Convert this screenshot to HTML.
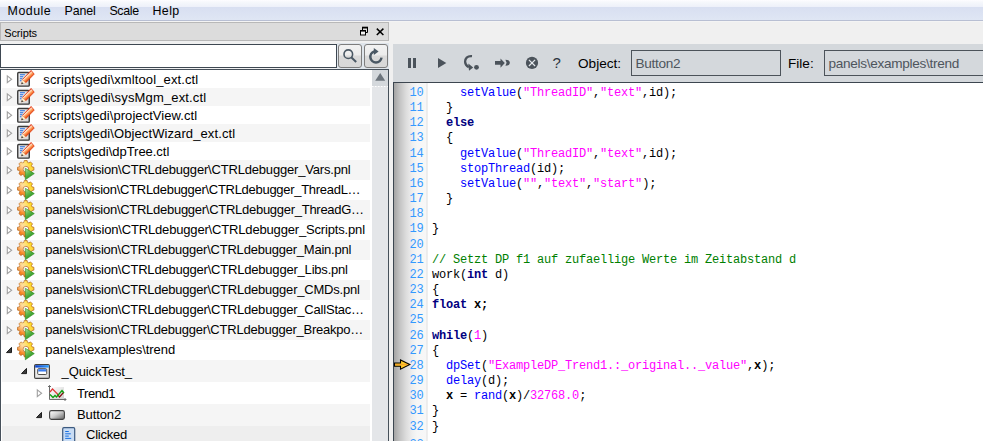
<!DOCTYPE html>
<html><head><meta charset="utf-8">
<style>
*{margin:0;padding:0;box-sizing:border-box}
html,body{width:983px;height:441px;overflow:hidden;background:#f0f0f0;font-family:"Liberation Sans",sans-serif;position:relative}
.a{position:absolute}
#menubar{left:0;top:0;width:983px;height:22px;background:linear-gradient(#fdfdff 0px,#f6f8fc 2px,#eef1fa 6.5px,#d8dff1 7px,#dfe6f4 20px,#b8bfd3 20px,#b8bfd3 21px,#f6f6f6 21px,#f2f2f2 22px)}
.mi{position:absolute;top:4px;font-size:12.4px;color:#000;white-space:pre}
#title{left:0;top:22px;width:389px;height:19px;background:#dcdcdc;border:1px solid #b8b8b8}
#title span{position:absolute;left:3.2px;top:3.6px;font-size:11px;color:#000;letter-spacing:-0.12px}
#search{left:0;top:44px;width:337px;height:24px;background:#fff;border:1px solid #3e4852}
.btn{top:44px;width:24px;height:24px;border:1px solid #7d7d7d;border-radius:3px;background:linear-gradient(#f2f2f2 0,#ececec 10px,#dadada 11px,#d8d8d8 100%)}
#tree{left:0;top:69px;width:389px;height:372px;border:1px solid #46505a;border-bottom:none;background:#fff;overflow:hidden}
.row{position:absolute;left:1px;width:369px;}
.row.g{background:#f5f5f5}
.t{position:absolute;font-size:13px;color:#000;white-space:pre}
#sb{left:372px;top:70px;width:16px;height:371px;background:#e4e6e9}
#sbup{left:372px;top:70px;width:16px;height:16px;background:#d4d8dc}
#toolbar{left:393px;top:44px;width:590px;height:38px;background:#d4d8dc}
#editor{left:393px;top:82px;width:590px;height:359px;background:#fff;border-top:1px solid #3c4650;border-left:1px solid #3c4650}
#gutter{left:394px;top:83px;width:34px;height:358px;background:linear-gradient(90deg,#a4a4a4 0px,#c4c4c4 6px,#dcdcdc 12px,#eeeeee 18px,#f6f6f6 23px,#f7f7f7 32px,#ebebeb 32px,#efefef 34px)}
.ln{position:absolute;left:394px;width:29.5px;text-align:right;font:12px "Liberation Mono",monospace;letter-spacing:-0.2px;color:#3399ff;white-space:pre;line-height:15px}
.cl{position:absolute;left:432px;font:12px "Liberation Mono",monospace;letter-spacing:-0.2px;color:#000;white-space:pre;line-height:15px}
.f{color:#0000ff}.s{color:#ff00ff}.k{color:#000080;font-weight:bold}.c{color:#008000}.b{font-weight:bold}
.lbl{position:absolute;font-size:13.6px;color:#000;top:56px;letter-spacing:0px}
.fld{position:absolute;top:50px;height:26px;border:1px solid #4c535a;background:#d4d8dc;font-size:13.6px;color:#4e555d;padding:4.5px 0 0 3.5px;letter-spacing:-0.3px;white-space:pre}
</style></head><body>
<div id="menubar" class="a">
  <span class="mi" style="left:7.6px;letter-spacing:0.5px">Module</span>
  <span class="mi" style="left:64.6px;letter-spacing:-0.12px">Panel</span>
  <span class="mi" style="left:109.4px;letter-spacing:-0.3px">Scale</span>
  <span class="mi" style="left:152.4px;letter-spacing:0.45px">Help</span>
</div>
<div id="title" class="a"><span>Scripts</span></div>
<div class="a" style="left:337px;top:43px;width:52px;height:26px;background:#dfe5eb"></div>
<div id="search" class="a"></div>
<div class="a btn" style="left:338px"></div>
<div class="a btn" style="left:364px"></div>
<div id="tree" class="a"></div>
<div class="row" style="top:70px;height:18px;left:2px;width:368px;"></div>
<div class="row g" style="top:88px;height:18px;left:2px;width:368px;"></div>
<div class="row" style="top:106px;height:18px;left:2px;width:368px;"></div>
<div class="row g" style="top:124px;height:18px;left:2px;width:368px;"></div>
<div class="row" style="top:142px;height:18px;left:2px;width:368px;"></div>
<div class="row g" style="top:160px;height:20px;left:2px;width:368px;"></div>
<div class="row" style="top:180px;height:20px;left:2px;width:368px;"></div>
<div class="row g" style="top:200px;height:20px;left:2px;width:368px;"></div>
<div class="row" style="top:220px;height:20px;left:2px;width:368px;"></div>
<div class="row g" style="top:240px;height:20px;left:2px;width:368px;"></div>
<div class="row" style="top:260px;height:20px;left:2px;width:368px;"></div>
<div class="row g" style="top:280px;height:20px;left:2px;width:368px;"></div>
<div class="row" style="top:300px;height:20px;left:2px;width:368px;"></div>
<div class="row g" style="top:320px;height:20px;left:2px;width:368px;"></div>
<div class="row" style="top:340px;height:20px;left:2px;width:368px;"></div>
<div class="row g" style="top:360px;height:22px;left:2px;width:368px;"></div>
<div class="row" style="top:382px;height:22px;left:2px;width:368px;"></div>
<div class="row g" style="top:404px;height:22px;left:2px;width:368px;"></div>
<div class="row" style="top:426px;height:18px;left:2px;width:368px;background:#eeeeee;"></div>
<svg class="a" style="left:5px;top:74px" width="9" height="10"><path d="M2.3 1.9 L6.6 5.3 L2.3 8.6 Z" fill="#fff" stroke="#a0a0a0" stroke-width="1.1"/></svg>
<svg class="a" style="left:17px;top:70px;overflow:visible" width="18" height="18" viewBox="0 0 18 18">
<defs><linearGradient id="pg" gradientUnits="userSpaceOnUse" x1="9.7" y1="4.9" x2="12.9" y2="8.4"><stop offset="0" stop-color="#e84020"/><stop offset="0.22" stop-color="#ffe6d0"/><stop offset="0.5" stop-color="#ffa868"/><stop offset="0.8" stop-color="#f47030"/><stop offset="1" stop-color="#e05010"/></linearGradient>
<linearGradient id="dg" x1="0" y1="0" x2="1" y2="1"><stop offset="0" stop-color="#f6f6f6"/><stop offset="1" stop-color="#d4d4d4"/></linearGradient></defs>
<rect x="0.75" y="2.55" width="11.5" height="13.6" rx="0.9" fill="url(#dg)" stroke="#3a3a3a" stroke-width="1.4"/>
<path d="M2.9 4.8h5M2.9 6.8h3.4M2.9 8.8h2.6M2.9 10.8h1.6" stroke="#1f6ae0" stroke-width="1.1"/>
<path d="M14.1 0.4 L17.2 4.1 L8.6 12.9 L5.4 9.6 Z" fill="url(#pg)" stroke="#e23a12" stroke-width="0.8"/>
<path d="M5.4 9.6 L8.6 12.9 L4.2 14.2 Z" fill="#fff4cc" stroke="#f0b090" stroke-width="0.4"/>
<path d="M4.1 14.3 L4.9 11.9 L6.5 13.4 Z" fill="#303030"/>
</svg>
<div class="t" style="left:43.3px;top:72px;letter-spacing:0.118px">scripts\gedi\xmltool_ext.ctl</div>
<svg class="a" style="left:5px;top:92px" width="9" height="10"><path d="M2.3 1.9 L6.6 5.3 L2.3 8.6 Z" fill="#fff" stroke="#a0a0a0" stroke-width="1.1"/></svg>
<svg class="a" style="left:17px;top:88px;overflow:visible" width="18" height="18" viewBox="0 0 18 18">
<defs><linearGradient id="pg" gradientUnits="userSpaceOnUse" x1="9.7" y1="4.9" x2="12.9" y2="8.4"><stop offset="0" stop-color="#e84020"/><stop offset="0.22" stop-color="#ffe6d0"/><stop offset="0.5" stop-color="#ffa868"/><stop offset="0.8" stop-color="#f47030"/><stop offset="1" stop-color="#e05010"/></linearGradient>
<linearGradient id="dg" x1="0" y1="0" x2="1" y2="1"><stop offset="0" stop-color="#f6f6f6"/><stop offset="1" stop-color="#d4d4d4"/></linearGradient></defs>
<rect x="0.75" y="2.55" width="11.5" height="13.6" rx="0.9" fill="url(#dg)" stroke="#3a3a3a" stroke-width="1.4"/>
<path d="M2.9 4.8h5M2.9 6.8h3.4M2.9 8.8h2.6M2.9 10.8h1.6" stroke="#1f6ae0" stroke-width="1.1"/>
<path d="M14.1 0.4 L17.2 4.1 L8.6 12.9 L5.4 9.6 Z" fill="url(#pg)" stroke="#e23a12" stroke-width="0.8"/>
<path d="M5.4 9.6 L8.6 12.9 L4.2 14.2 Z" fill="#fff4cc" stroke="#f0b090" stroke-width="0.4"/>
<path d="M4.1 14.3 L4.9 11.9 L6.5 13.4 Z" fill="#303030"/>
</svg>
<div class="t" style="left:43.3px;top:90px;letter-spacing:0.149px">scripts\gedi\sysMgm_ext.ctl</div>
<svg class="a" style="left:5px;top:110px" width="9" height="10"><path d="M2.3 1.9 L6.6 5.3 L2.3 8.6 Z" fill="#fff" stroke="#a0a0a0" stroke-width="1.1"/></svg>
<svg class="a" style="left:17px;top:106px;overflow:visible" width="18" height="18" viewBox="0 0 18 18">
<defs><linearGradient id="pg" gradientUnits="userSpaceOnUse" x1="9.7" y1="4.9" x2="12.9" y2="8.4"><stop offset="0" stop-color="#e84020"/><stop offset="0.22" stop-color="#ffe6d0"/><stop offset="0.5" stop-color="#ffa868"/><stop offset="0.8" stop-color="#f47030"/><stop offset="1" stop-color="#e05010"/></linearGradient>
<linearGradient id="dg" x1="0" y1="0" x2="1" y2="1"><stop offset="0" stop-color="#f6f6f6"/><stop offset="1" stop-color="#d4d4d4"/></linearGradient></defs>
<rect x="0.75" y="2.55" width="11.5" height="13.6" rx="0.9" fill="url(#dg)" stroke="#3a3a3a" stroke-width="1.4"/>
<path d="M2.9 4.8h5M2.9 6.8h3.4M2.9 8.8h2.6M2.9 10.8h1.6" stroke="#1f6ae0" stroke-width="1.1"/>
<path d="M14.1 0.4 L17.2 4.1 L8.6 12.9 L5.4 9.6 Z" fill="url(#pg)" stroke="#e23a12" stroke-width="0.8"/>
<path d="M5.4 9.6 L8.6 12.9 L4.2 14.2 Z" fill="#fff4cc" stroke="#f0b090" stroke-width="0.4"/>
<path d="M4.1 14.3 L4.9 11.9 L6.5 13.4 Z" fill="#303030"/>
</svg>
<div class="t" style="left:43.3px;top:108px;letter-spacing:0.059px">scripts\gedi\projectView.ctl</div>
<svg class="a" style="left:5px;top:128px" width="9" height="10"><path d="M2.3 1.9 L6.6 5.3 L2.3 8.6 Z" fill="#fff" stroke="#a0a0a0" stroke-width="1.1"/></svg>
<svg class="a" style="left:17px;top:124px;overflow:visible" width="18" height="18" viewBox="0 0 18 18">
<defs><linearGradient id="pg" gradientUnits="userSpaceOnUse" x1="9.7" y1="4.9" x2="12.9" y2="8.4"><stop offset="0" stop-color="#e84020"/><stop offset="0.22" stop-color="#ffe6d0"/><stop offset="0.5" stop-color="#ffa868"/><stop offset="0.8" stop-color="#f47030"/><stop offset="1" stop-color="#e05010"/></linearGradient>
<linearGradient id="dg" x1="0" y1="0" x2="1" y2="1"><stop offset="0" stop-color="#f6f6f6"/><stop offset="1" stop-color="#d4d4d4"/></linearGradient></defs>
<rect x="0.75" y="2.55" width="11.5" height="13.6" rx="0.9" fill="url(#dg)" stroke="#3a3a3a" stroke-width="1.4"/>
<path d="M2.9 4.8h5M2.9 6.8h3.4M2.9 8.8h2.6M2.9 10.8h1.6" stroke="#1f6ae0" stroke-width="1.1"/>
<path d="M14.1 0.4 L17.2 4.1 L8.6 12.9 L5.4 9.6 Z" fill="url(#pg)" stroke="#e23a12" stroke-width="0.8"/>
<path d="M5.4 9.6 L8.6 12.9 L4.2 14.2 Z" fill="#fff4cc" stroke="#f0b090" stroke-width="0.4"/>
<path d="M4.1 14.3 L4.9 11.9 L6.5 13.4 Z" fill="#303030"/>
</svg>
<div class="t" style="left:43.3px;top:126px;letter-spacing:0.101px">scripts\gedi\ObjectWizard_ext.ctl</div>
<svg class="a" style="left:5px;top:146px" width="9" height="10"><path d="M2.3 1.9 L6.6 5.3 L2.3 8.6 Z" fill="#fff" stroke="#a0a0a0" stroke-width="1.1"/></svg>
<svg class="a" style="left:17px;top:142px;overflow:visible" width="18" height="18" viewBox="0 0 18 18">
<defs><linearGradient id="pg" gradientUnits="userSpaceOnUse" x1="9.7" y1="4.9" x2="12.9" y2="8.4"><stop offset="0" stop-color="#e84020"/><stop offset="0.22" stop-color="#ffe6d0"/><stop offset="0.5" stop-color="#ffa868"/><stop offset="0.8" stop-color="#f47030"/><stop offset="1" stop-color="#e05010"/></linearGradient>
<linearGradient id="dg" x1="0" y1="0" x2="1" y2="1"><stop offset="0" stop-color="#f6f6f6"/><stop offset="1" stop-color="#d4d4d4"/></linearGradient></defs>
<rect x="0.75" y="2.55" width="11.5" height="13.6" rx="0.9" fill="url(#dg)" stroke="#3a3a3a" stroke-width="1.4"/>
<path d="M2.9 4.8h5M2.9 6.8h3.4M2.9 8.8h2.6M2.9 10.8h1.6" stroke="#1f6ae0" stroke-width="1.1"/>
<path d="M14.1 0.4 L17.2 4.1 L8.6 12.9 L5.4 9.6 Z" fill="url(#pg)" stroke="#e23a12" stroke-width="0.8"/>
<path d="M5.4 9.6 L8.6 12.9 L4.2 14.2 Z" fill="#fff4cc" stroke="#f0b090" stroke-width="0.4"/>
<path d="M4.1 14.3 L4.9 11.9 L6.5 13.4 Z" fill="#303030"/>
</svg>
<div class="t" style="left:43.3px;top:144px;letter-spacing:-0.031px">scripts\gedi\dpTree.ctl</div>
<svg class="a" style="left:5px;top:165px" width="9" height="10"><path d="M2.3 1.9 L6.6 5.3 L2.3 8.6 Z" fill="#fff" stroke="#a0a0a0" stroke-width="1.1"/></svg>
<svg class="a" style="left:17px;top:160px" width="19" height="21" viewBox="0 0 19 21">
<defs><linearGradient id="gg160" x1="0" y1="1" x2="1" y2="0"><stop offset="0" stop-color="#f06000"/><stop offset="0.38" stop-color="#fca040"/><stop offset="0.62" stop-color="#ffd848"/><stop offset="1" stop-color="#ffe000"/></linearGradient>
<radialGradient id="gh160" cx="0.3" cy="0.3" r="0.45"><stop offset="0" stop-color="#fff4e0" stop-opacity="0.6"/><stop offset="1" stop-color="#fff8e8" stop-opacity="0"/></radialGradient>
<linearGradient id="tg160" x1="0" y1="0" x2="0.6" y2="1"><stop offset="0" stop-color="#b8e4a8"/><stop offset="0.45" stop-color="#60b850"/><stop offset="1" stop-color="#1c8a10"/></linearGradient></defs>
<path d="M15.06 6.94 L16.88 7.30 L16.88 10.10 L15.06 10.46 L14.44 11.95 L15.48 13.49 L13.49 15.48 L11.95 14.44 L10.46 15.06 L10.10 16.88 L7.30 16.88 L6.94 15.06 L5.45 14.44 L3.91 15.48 L1.92 13.49 L2.96 11.95 L2.34 10.46 L0.52 10.10 L0.52 7.30 L2.34 6.94 L2.96 5.45 L1.92 3.91 L3.91 1.92 L5.45 2.96 L6.94 2.34 L7.30 0.52 L10.10 0.52 L10.46 2.34 L11.95 2.96 L13.49 1.92 L15.48 3.91 L14.44 5.45 Z M11.80 9.2 A2.9 2.9 0 1 0 6.00 9.2 A2.9 2.9 0 1 0 11.80 9.2 Z" fill="url(#gg160)" fill-rule="evenodd" stroke="#b86a20" stroke-width="0.8"/>
<path d="M15.06 6.94 L16.88 7.30 L16.88 10.10 L15.06 10.46 L14.44 11.95 L15.48 13.49 L13.49 15.48 L11.95 14.44 L10.46 15.06 L10.10 16.88 L7.30 16.88 L6.94 15.06 L5.45 14.44 L3.91 15.48 L1.92 13.49 L2.96 11.95 L2.34 10.46 L0.52 10.10 L0.52 7.30 L2.34 6.94 L2.96 5.45 L1.92 3.91 L3.91 1.92 L5.45 2.96 L6.94 2.34 L7.30 0.52 L10.10 0.52 L10.46 2.34 L11.95 2.96 L13.49 1.92 L15.48 3.91 L14.44 5.45 Z M11.80 9.2 A2.9 2.9 0 1 0 6.00 9.2 A2.9 2.9 0 1 0 11.80 9.2 Z" fill="url(#gh160)" fill-rule="evenodd"/>
<path d="M8.3 8.3 L17.3 13.6 L8.3 19.8 Z" fill="url(#tg160)" stroke="#2a8a1e" stroke-width="0.6"/>
</svg>
<div class="t" style="left:45.3px;top:162.3px;letter-spacing:-0.187px">panels\vision\CTRLdebugger\CTRLdebugger_Vars.pnl</div>
<svg class="a" style="left:5px;top:185px" width="9" height="10"><path d="M2.3 1.9 L6.6 5.3 L2.3 8.6 Z" fill="#fff" stroke="#a0a0a0" stroke-width="1.1"/></svg>
<svg class="a" style="left:17px;top:180px" width="19" height="21" viewBox="0 0 19 21">
<defs><linearGradient id="gg180" x1="0" y1="1" x2="1" y2="0"><stop offset="0" stop-color="#f06000"/><stop offset="0.38" stop-color="#fca040"/><stop offset="0.62" stop-color="#ffd848"/><stop offset="1" stop-color="#ffe000"/></linearGradient>
<radialGradient id="gh180" cx="0.3" cy="0.3" r="0.45"><stop offset="0" stop-color="#fff4e0" stop-opacity="0.6"/><stop offset="1" stop-color="#fff8e8" stop-opacity="0"/></radialGradient>
<linearGradient id="tg180" x1="0" y1="0" x2="0.6" y2="1"><stop offset="0" stop-color="#b8e4a8"/><stop offset="0.45" stop-color="#60b850"/><stop offset="1" stop-color="#1c8a10"/></linearGradient></defs>
<path d="M15.06 6.94 L16.88 7.30 L16.88 10.10 L15.06 10.46 L14.44 11.95 L15.48 13.49 L13.49 15.48 L11.95 14.44 L10.46 15.06 L10.10 16.88 L7.30 16.88 L6.94 15.06 L5.45 14.44 L3.91 15.48 L1.92 13.49 L2.96 11.95 L2.34 10.46 L0.52 10.10 L0.52 7.30 L2.34 6.94 L2.96 5.45 L1.92 3.91 L3.91 1.92 L5.45 2.96 L6.94 2.34 L7.30 0.52 L10.10 0.52 L10.46 2.34 L11.95 2.96 L13.49 1.92 L15.48 3.91 L14.44 5.45 Z M11.80 9.2 A2.9 2.9 0 1 0 6.00 9.2 A2.9 2.9 0 1 0 11.80 9.2 Z" fill="url(#gg180)" fill-rule="evenodd" stroke="#b86a20" stroke-width="0.8"/>
<path d="M15.06 6.94 L16.88 7.30 L16.88 10.10 L15.06 10.46 L14.44 11.95 L15.48 13.49 L13.49 15.48 L11.95 14.44 L10.46 15.06 L10.10 16.88 L7.30 16.88 L6.94 15.06 L5.45 14.44 L3.91 15.48 L1.92 13.49 L2.96 11.95 L2.34 10.46 L0.52 10.10 L0.52 7.30 L2.34 6.94 L2.96 5.45 L1.92 3.91 L3.91 1.92 L5.45 2.96 L6.94 2.34 L7.30 0.52 L10.10 0.52 L10.46 2.34 L11.95 2.96 L13.49 1.92 L15.48 3.91 L14.44 5.45 Z M11.80 9.2 A2.9 2.9 0 1 0 6.00 9.2 A2.9 2.9 0 1 0 11.80 9.2 Z" fill="url(#gh180)" fill-rule="evenodd"/>
<path d="M8.3 8.3 L17.3 13.6 L8.3 19.8 Z" fill="url(#tg180)" stroke="#2a8a1e" stroke-width="0.6"/>
</svg>
<div class="t" style="left:45.3px;top:182.3px;letter-spacing:-0.287px">panels\vision\CTRLdebugger\CTRLdebugger_ThreadL…</div>
<svg class="a" style="left:5px;top:205px" width="9" height="10"><path d="M2.3 1.9 L6.6 5.3 L2.3 8.6 Z" fill="#fff" stroke="#a0a0a0" stroke-width="1.1"/></svg>
<svg class="a" style="left:17px;top:200px" width="19" height="21" viewBox="0 0 19 21">
<defs><linearGradient id="gg200" x1="0" y1="1" x2="1" y2="0"><stop offset="0" stop-color="#f06000"/><stop offset="0.38" stop-color="#fca040"/><stop offset="0.62" stop-color="#ffd848"/><stop offset="1" stop-color="#ffe000"/></linearGradient>
<radialGradient id="gh200" cx="0.3" cy="0.3" r="0.45"><stop offset="0" stop-color="#fff4e0" stop-opacity="0.6"/><stop offset="1" stop-color="#fff8e8" stop-opacity="0"/></radialGradient>
<linearGradient id="tg200" x1="0" y1="0" x2="0.6" y2="1"><stop offset="0" stop-color="#b8e4a8"/><stop offset="0.45" stop-color="#60b850"/><stop offset="1" stop-color="#1c8a10"/></linearGradient></defs>
<path d="M15.06 6.94 L16.88 7.30 L16.88 10.10 L15.06 10.46 L14.44 11.95 L15.48 13.49 L13.49 15.48 L11.95 14.44 L10.46 15.06 L10.10 16.88 L7.30 16.88 L6.94 15.06 L5.45 14.44 L3.91 15.48 L1.92 13.49 L2.96 11.95 L2.34 10.46 L0.52 10.10 L0.52 7.30 L2.34 6.94 L2.96 5.45 L1.92 3.91 L3.91 1.92 L5.45 2.96 L6.94 2.34 L7.30 0.52 L10.10 0.52 L10.46 2.34 L11.95 2.96 L13.49 1.92 L15.48 3.91 L14.44 5.45 Z M11.80 9.2 A2.9 2.9 0 1 0 6.00 9.2 A2.9 2.9 0 1 0 11.80 9.2 Z" fill="url(#gg200)" fill-rule="evenodd" stroke="#b86a20" stroke-width="0.8"/>
<path d="M15.06 6.94 L16.88 7.30 L16.88 10.10 L15.06 10.46 L14.44 11.95 L15.48 13.49 L13.49 15.48 L11.95 14.44 L10.46 15.06 L10.10 16.88 L7.30 16.88 L6.94 15.06 L5.45 14.44 L3.91 15.48 L1.92 13.49 L2.96 11.95 L2.34 10.46 L0.52 10.10 L0.52 7.30 L2.34 6.94 L2.96 5.45 L1.92 3.91 L3.91 1.92 L5.45 2.96 L6.94 2.34 L7.30 0.52 L10.10 0.52 L10.46 2.34 L11.95 2.96 L13.49 1.92 L15.48 3.91 L14.44 5.45 Z M11.80 9.2 A2.9 2.9 0 1 0 6.00 9.2 A2.9 2.9 0 1 0 11.80 9.2 Z" fill="url(#gh200)" fill-rule="evenodd"/>
<path d="M8.3 8.3 L17.3 13.6 L8.3 19.8 Z" fill="url(#tg200)" stroke="#2a8a1e" stroke-width="0.6"/>
</svg>
<div class="t" style="left:45.3px;top:202.3px;letter-spacing:-0.274px">panels\vision\CTRLdebugger\CTRLdebugger_ThreadG…</div>
<svg class="a" style="left:5px;top:225px" width="9" height="10"><path d="M2.3 1.9 L6.6 5.3 L2.3 8.6 Z" fill="#fff" stroke="#a0a0a0" stroke-width="1.1"/></svg>
<svg class="a" style="left:17px;top:220px" width="19" height="21" viewBox="0 0 19 21">
<defs><linearGradient id="gg220" x1="0" y1="1" x2="1" y2="0"><stop offset="0" stop-color="#f06000"/><stop offset="0.38" stop-color="#fca040"/><stop offset="0.62" stop-color="#ffd848"/><stop offset="1" stop-color="#ffe000"/></linearGradient>
<radialGradient id="gh220" cx="0.3" cy="0.3" r="0.45"><stop offset="0" stop-color="#fff4e0" stop-opacity="0.6"/><stop offset="1" stop-color="#fff8e8" stop-opacity="0"/></radialGradient>
<linearGradient id="tg220" x1="0" y1="0" x2="0.6" y2="1"><stop offset="0" stop-color="#b8e4a8"/><stop offset="0.45" stop-color="#60b850"/><stop offset="1" stop-color="#1c8a10"/></linearGradient></defs>
<path d="M15.06 6.94 L16.88 7.30 L16.88 10.10 L15.06 10.46 L14.44 11.95 L15.48 13.49 L13.49 15.48 L11.95 14.44 L10.46 15.06 L10.10 16.88 L7.30 16.88 L6.94 15.06 L5.45 14.44 L3.91 15.48 L1.92 13.49 L2.96 11.95 L2.34 10.46 L0.52 10.10 L0.52 7.30 L2.34 6.94 L2.96 5.45 L1.92 3.91 L3.91 1.92 L5.45 2.96 L6.94 2.34 L7.30 0.52 L10.10 0.52 L10.46 2.34 L11.95 2.96 L13.49 1.92 L15.48 3.91 L14.44 5.45 Z M11.80 9.2 A2.9 2.9 0 1 0 6.00 9.2 A2.9 2.9 0 1 0 11.80 9.2 Z" fill="url(#gg220)" fill-rule="evenodd" stroke="#b86a20" stroke-width="0.8"/>
<path d="M15.06 6.94 L16.88 7.30 L16.88 10.10 L15.06 10.46 L14.44 11.95 L15.48 13.49 L13.49 15.48 L11.95 14.44 L10.46 15.06 L10.10 16.88 L7.30 16.88 L6.94 15.06 L5.45 14.44 L3.91 15.48 L1.92 13.49 L2.96 11.95 L2.34 10.46 L0.52 10.10 L0.52 7.30 L2.34 6.94 L2.96 5.45 L1.92 3.91 L3.91 1.92 L5.45 2.96 L6.94 2.34 L7.30 0.52 L10.10 0.52 L10.46 2.34 L11.95 2.96 L13.49 1.92 L15.48 3.91 L14.44 5.45 Z M11.80 9.2 A2.9 2.9 0 1 0 6.00 9.2 A2.9 2.9 0 1 0 11.80 9.2 Z" fill="url(#gh220)" fill-rule="evenodd"/>
<path d="M8.3 8.3 L17.3 13.6 L8.3 19.8 Z" fill="url(#tg220)" stroke="#2a8a1e" stroke-width="0.6"/>
</svg>
<div class="t" style="left:45.3px;top:222.3px;letter-spacing:-0.167px">panels\vision\CTRLdebugger\CTRLdebugger_Scripts.pnl</div>
<svg class="a" style="left:5px;top:245px" width="9" height="10"><path d="M2.3 1.9 L6.6 5.3 L2.3 8.6 Z" fill="#fff" stroke="#a0a0a0" stroke-width="1.1"/></svg>
<svg class="a" style="left:17px;top:240px" width="19" height="21" viewBox="0 0 19 21">
<defs><linearGradient id="gg240" x1="0" y1="1" x2="1" y2="0"><stop offset="0" stop-color="#f06000"/><stop offset="0.38" stop-color="#fca040"/><stop offset="0.62" stop-color="#ffd848"/><stop offset="1" stop-color="#ffe000"/></linearGradient>
<radialGradient id="gh240" cx="0.3" cy="0.3" r="0.45"><stop offset="0" stop-color="#fff4e0" stop-opacity="0.6"/><stop offset="1" stop-color="#fff8e8" stop-opacity="0"/></radialGradient>
<linearGradient id="tg240" x1="0" y1="0" x2="0.6" y2="1"><stop offset="0" stop-color="#b8e4a8"/><stop offset="0.45" stop-color="#60b850"/><stop offset="1" stop-color="#1c8a10"/></linearGradient></defs>
<path d="M15.06 6.94 L16.88 7.30 L16.88 10.10 L15.06 10.46 L14.44 11.95 L15.48 13.49 L13.49 15.48 L11.95 14.44 L10.46 15.06 L10.10 16.88 L7.30 16.88 L6.94 15.06 L5.45 14.44 L3.91 15.48 L1.92 13.49 L2.96 11.95 L2.34 10.46 L0.52 10.10 L0.52 7.30 L2.34 6.94 L2.96 5.45 L1.92 3.91 L3.91 1.92 L5.45 2.96 L6.94 2.34 L7.30 0.52 L10.10 0.52 L10.46 2.34 L11.95 2.96 L13.49 1.92 L15.48 3.91 L14.44 5.45 Z M11.80 9.2 A2.9 2.9 0 1 0 6.00 9.2 A2.9 2.9 0 1 0 11.80 9.2 Z" fill="url(#gg240)" fill-rule="evenodd" stroke="#b86a20" stroke-width="0.8"/>
<path d="M15.06 6.94 L16.88 7.30 L16.88 10.10 L15.06 10.46 L14.44 11.95 L15.48 13.49 L13.49 15.48 L11.95 14.44 L10.46 15.06 L10.10 16.88 L7.30 16.88 L6.94 15.06 L5.45 14.44 L3.91 15.48 L1.92 13.49 L2.96 11.95 L2.34 10.46 L0.52 10.10 L0.52 7.30 L2.34 6.94 L2.96 5.45 L1.92 3.91 L3.91 1.92 L5.45 2.96 L6.94 2.34 L7.30 0.52 L10.10 0.52 L10.46 2.34 L11.95 2.96 L13.49 1.92 L15.48 3.91 L14.44 5.45 Z M11.80 9.2 A2.9 2.9 0 1 0 6.00 9.2 A2.9 2.9 0 1 0 11.80 9.2 Z" fill="url(#gh240)" fill-rule="evenodd"/>
<path d="M8.3 8.3 L17.3 13.6 L8.3 19.8 Z" fill="url(#tg240)" stroke="#2a8a1e" stroke-width="0.6"/>
</svg>
<div class="t" style="left:45.3px;top:242.3px;letter-spacing:-0.222px">panels\vision\CTRLdebugger\CTRLdebugger_Main.pnl</div>
<svg class="a" style="left:5px;top:265px" width="9" height="10"><path d="M2.3 1.9 L6.6 5.3 L2.3 8.6 Z" fill="#fff" stroke="#a0a0a0" stroke-width="1.1"/></svg>
<svg class="a" style="left:17px;top:260px" width="19" height="21" viewBox="0 0 19 21">
<defs><linearGradient id="gg260" x1="0" y1="1" x2="1" y2="0"><stop offset="0" stop-color="#f06000"/><stop offset="0.38" stop-color="#fca040"/><stop offset="0.62" stop-color="#ffd848"/><stop offset="1" stop-color="#ffe000"/></linearGradient>
<radialGradient id="gh260" cx="0.3" cy="0.3" r="0.45"><stop offset="0" stop-color="#fff4e0" stop-opacity="0.6"/><stop offset="1" stop-color="#fff8e8" stop-opacity="0"/></radialGradient>
<linearGradient id="tg260" x1="0" y1="0" x2="0.6" y2="1"><stop offset="0" stop-color="#b8e4a8"/><stop offset="0.45" stop-color="#60b850"/><stop offset="1" stop-color="#1c8a10"/></linearGradient></defs>
<path d="M15.06 6.94 L16.88 7.30 L16.88 10.10 L15.06 10.46 L14.44 11.95 L15.48 13.49 L13.49 15.48 L11.95 14.44 L10.46 15.06 L10.10 16.88 L7.30 16.88 L6.94 15.06 L5.45 14.44 L3.91 15.48 L1.92 13.49 L2.96 11.95 L2.34 10.46 L0.52 10.10 L0.52 7.30 L2.34 6.94 L2.96 5.45 L1.92 3.91 L3.91 1.92 L5.45 2.96 L6.94 2.34 L7.30 0.52 L10.10 0.52 L10.46 2.34 L11.95 2.96 L13.49 1.92 L15.48 3.91 L14.44 5.45 Z M11.80 9.2 A2.9 2.9 0 1 0 6.00 9.2 A2.9 2.9 0 1 0 11.80 9.2 Z" fill="url(#gg260)" fill-rule="evenodd" stroke="#b86a20" stroke-width="0.8"/>
<path d="M15.06 6.94 L16.88 7.30 L16.88 10.10 L15.06 10.46 L14.44 11.95 L15.48 13.49 L13.49 15.48 L11.95 14.44 L10.46 15.06 L10.10 16.88 L7.30 16.88 L6.94 15.06 L5.45 14.44 L3.91 15.48 L1.92 13.49 L2.96 11.95 L2.34 10.46 L0.52 10.10 L0.52 7.30 L2.34 6.94 L2.96 5.45 L1.92 3.91 L3.91 1.92 L5.45 2.96 L6.94 2.34 L7.30 0.52 L10.10 0.52 L10.46 2.34 L11.95 2.96 L13.49 1.92 L15.48 3.91 L14.44 5.45 Z M11.80 9.2 A2.9 2.9 0 1 0 6.00 9.2 A2.9 2.9 0 1 0 11.80 9.2 Z" fill="url(#gh260)" fill-rule="evenodd"/>
<path d="M8.3 8.3 L17.3 13.6 L8.3 19.8 Z" fill="url(#tg260)" stroke="#2a8a1e" stroke-width="0.6"/>
</svg>
<div class="t" style="left:45.3px;top:262.3px;letter-spacing:-0.202px">panels\vision\CTRLdebugger\CTRLdebugger_Libs.pnl</div>
<svg class="a" style="left:5px;top:285px" width="9" height="10"><path d="M2.3 1.9 L6.6 5.3 L2.3 8.6 Z" fill="#fff" stroke="#a0a0a0" stroke-width="1.1"/></svg>
<svg class="a" style="left:17px;top:280px" width="19" height="21" viewBox="0 0 19 21">
<defs><linearGradient id="gg280" x1="0" y1="1" x2="1" y2="0"><stop offset="0" stop-color="#f06000"/><stop offset="0.38" stop-color="#fca040"/><stop offset="0.62" stop-color="#ffd848"/><stop offset="1" stop-color="#ffe000"/></linearGradient>
<radialGradient id="gh280" cx="0.3" cy="0.3" r="0.45"><stop offset="0" stop-color="#fff4e0" stop-opacity="0.6"/><stop offset="1" stop-color="#fff8e8" stop-opacity="0"/></radialGradient>
<linearGradient id="tg280" x1="0" y1="0" x2="0.6" y2="1"><stop offset="0" stop-color="#b8e4a8"/><stop offset="0.45" stop-color="#60b850"/><stop offset="1" stop-color="#1c8a10"/></linearGradient></defs>
<path d="M15.06 6.94 L16.88 7.30 L16.88 10.10 L15.06 10.46 L14.44 11.95 L15.48 13.49 L13.49 15.48 L11.95 14.44 L10.46 15.06 L10.10 16.88 L7.30 16.88 L6.94 15.06 L5.45 14.44 L3.91 15.48 L1.92 13.49 L2.96 11.95 L2.34 10.46 L0.52 10.10 L0.52 7.30 L2.34 6.94 L2.96 5.45 L1.92 3.91 L3.91 1.92 L5.45 2.96 L6.94 2.34 L7.30 0.52 L10.10 0.52 L10.46 2.34 L11.95 2.96 L13.49 1.92 L15.48 3.91 L14.44 5.45 Z M11.80 9.2 A2.9 2.9 0 1 0 6.00 9.2 A2.9 2.9 0 1 0 11.80 9.2 Z" fill="url(#gg280)" fill-rule="evenodd" stroke="#b86a20" stroke-width="0.8"/>
<path d="M15.06 6.94 L16.88 7.30 L16.88 10.10 L15.06 10.46 L14.44 11.95 L15.48 13.49 L13.49 15.48 L11.95 14.44 L10.46 15.06 L10.10 16.88 L7.30 16.88 L6.94 15.06 L5.45 14.44 L3.91 15.48 L1.92 13.49 L2.96 11.95 L2.34 10.46 L0.52 10.10 L0.52 7.30 L2.34 6.94 L2.96 5.45 L1.92 3.91 L3.91 1.92 L5.45 2.96 L6.94 2.34 L7.30 0.52 L10.10 0.52 L10.46 2.34 L11.95 2.96 L13.49 1.92 L15.48 3.91 L14.44 5.45 Z M11.80 9.2 A2.9 2.9 0 1 0 6.00 9.2 A2.9 2.9 0 1 0 11.80 9.2 Z" fill="url(#gh280)" fill-rule="evenodd"/>
<path d="M8.3 8.3 L17.3 13.6 L8.3 19.8 Z" fill="url(#tg280)" stroke="#2a8a1e" stroke-width="0.6"/>
</svg>
<div class="t" style="left:45.3px;top:282.3px;letter-spacing:-0.21px">panels\vision\CTRLdebugger\CTRLdebugger_CMDs.pnl</div>
<svg class="a" style="left:5px;top:305px" width="9" height="10"><path d="M2.3 1.9 L6.6 5.3 L2.3 8.6 Z" fill="#fff" stroke="#a0a0a0" stroke-width="1.1"/></svg>
<svg class="a" style="left:17px;top:300px" width="19" height="21" viewBox="0 0 19 21">
<defs><linearGradient id="gg300" x1="0" y1="1" x2="1" y2="0"><stop offset="0" stop-color="#f06000"/><stop offset="0.38" stop-color="#fca040"/><stop offset="0.62" stop-color="#ffd848"/><stop offset="1" stop-color="#ffe000"/></linearGradient>
<radialGradient id="gh300" cx="0.3" cy="0.3" r="0.45"><stop offset="0" stop-color="#fff4e0" stop-opacity="0.6"/><stop offset="1" stop-color="#fff8e8" stop-opacity="0"/></radialGradient>
<linearGradient id="tg300" x1="0" y1="0" x2="0.6" y2="1"><stop offset="0" stop-color="#b8e4a8"/><stop offset="0.45" stop-color="#60b850"/><stop offset="1" stop-color="#1c8a10"/></linearGradient></defs>
<path d="M15.06 6.94 L16.88 7.30 L16.88 10.10 L15.06 10.46 L14.44 11.95 L15.48 13.49 L13.49 15.48 L11.95 14.44 L10.46 15.06 L10.10 16.88 L7.30 16.88 L6.94 15.06 L5.45 14.44 L3.91 15.48 L1.92 13.49 L2.96 11.95 L2.34 10.46 L0.52 10.10 L0.52 7.30 L2.34 6.94 L2.96 5.45 L1.92 3.91 L3.91 1.92 L5.45 2.96 L6.94 2.34 L7.30 0.52 L10.10 0.52 L10.46 2.34 L11.95 2.96 L13.49 1.92 L15.48 3.91 L14.44 5.45 Z M11.80 9.2 A2.9 2.9 0 1 0 6.00 9.2 A2.9 2.9 0 1 0 11.80 9.2 Z" fill="url(#gg300)" fill-rule="evenodd" stroke="#b86a20" stroke-width="0.8"/>
<path d="M15.06 6.94 L16.88 7.30 L16.88 10.10 L15.06 10.46 L14.44 11.95 L15.48 13.49 L13.49 15.48 L11.95 14.44 L10.46 15.06 L10.10 16.88 L7.30 16.88 L6.94 15.06 L5.45 14.44 L3.91 15.48 L1.92 13.49 L2.96 11.95 L2.34 10.46 L0.52 10.10 L0.52 7.30 L2.34 6.94 L2.96 5.45 L1.92 3.91 L3.91 1.92 L5.45 2.96 L6.94 2.34 L7.30 0.52 L10.10 0.52 L10.46 2.34 L11.95 2.96 L13.49 1.92 L15.48 3.91 L14.44 5.45 Z M11.80 9.2 A2.9 2.9 0 1 0 6.00 9.2 A2.9 2.9 0 1 0 11.80 9.2 Z" fill="url(#gh300)" fill-rule="evenodd"/>
<path d="M8.3 8.3 L17.3 13.6 L8.3 19.8 Z" fill="url(#tg300)" stroke="#2a8a1e" stroke-width="0.6"/>
</svg>
<div class="t" style="left:45.3px;top:302.3px;letter-spacing:-0.208px">panels\vision\CTRLdebugger\CTRLdebugger_CallStac…</div>
<svg class="a" style="left:5px;top:325px" width="9" height="10"><path d="M2.3 1.9 L6.6 5.3 L2.3 8.6 Z" fill="#fff" stroke="#a0a0a0" stroke-width="1.1"/></svg>
<svg class="a" style="left:17px;top:320px" width="19" height="21" viewBox="0 0 19 21">
<defs><linearGradient id="gg320" x1="0" y1="1" x2="1" y2="0"><stop offset="0" stop-color="#f06000"/><stop offset="0.38" stop-color="#fca040"/><stop offset="0.62" stop-color="#ffd848"/><stop offset="1" stop-color="#ffe000"/></linearGradient>
<radialGradient id="gh320" cx="0.3" cy="0.3" r="0.45"><stop offset="0" stop-color="#fff4e0" stop-opacity="0.6"/><stop offset="1" stop-color="#fff8e8" stop-opacity="0"/></radialGradient>
<linearGradient id="tg320" x1="0" y1="0" x2="0.6" y2="1"><stop offset="0" stop-color="#b8e4a8"/><stop offset="0.45" stop-color="#60b850"/><stop offset="1" stop-color="#1c8a10"/></linearGradient></defs>
<path d="M15.06 6.94 L16.88 7.30 L16.88 10.10 L15.06 10.46 L14.44 11.95 L15.48 13.49 L13.49 15.48 L11.95 14.44 L10.46 15.06 L10.10 16.88 L7.30 16.88 L6.94 15.06 L5.45 14.44 L3.91 15.48 L1.92 13.49 L2.96 11.95 L2.34 10.46 L0.52 10.10 L0.52 7.30 L2.34 6.94 L2.96 5.45 L1.92 3.91 L3.91 1.92 L5.45 2.96 L6.94 2.34 L7.30 0.52 L10.10 0.52 L10.46 2.34 L11.95 2.96 L13.49 1.92 L15.48 3.91 L14.44 5.45 Z M11.80 9.2 A2.9 2.9 0 1 0 6.00 9.2 A2.9 2.9 0 1 0 11.80 9.2 Z" fill="url(#gg320)" fill-rule="evenodd" stroke="#b86a20" stroke-width="0.8"/>
<path d="M15.06 6.94 L16.88 7.30 L16.88 10.10 L15.06 10.46 L14.44 11.95 L15.48 13.49 L13.49 15.48 L11.95 14.44 L10.46 15.06 L10.10 16.88 L7.30 16.88 L6.94 15.06 L5.45 14.44 L3.91 15.48 L1.92 13.49 L2.96 11.95 L2.34 10.46 L0.52 10.10 L0.52 7.30 L2.34 6.94 L2.96 5.45 L1.92 3.91 L3.91 1.92 L5.45 2.96 L6.94 2.34 L7.30 0.52 L10.10 0.52 L10.46 2.34 L11.95 2.96 L13.49 1.92 L15.48 3.91 L14.44 5.45 Z M11.80 9.2 A2.9 2.9 0 1 0 6.00 9.2 A2.9 2.9 0 1 0 11.80 9.2 Z" fill="url(#gh320)" fill-rule="evenodd"/>
<path d="M8.3 8.3 L17.3 13.6 L8.3 19.8 Z" fill="url(#tg320)" stroke="#2a8a1e" stroke-width="0.6"/>
</svg>
<div class="t" style="left:45.3px;top:322.3px;letter-spacing:-0.23px">panels\vision\CTRLdebugger\CTRLdebugger_Breakpo…</div>
<svg class="a" style="left:5px;top:345px" width="8" height="10"><path d="M6.5 2.4 L6.5 7.6 L1.5 7.6 Z" fill="#3c3c3c" stroke="#1e1e1e" stroke-width="1"/></svg>
<svg class="a" style="left:17px;top:340px" width="19" height="21" viewBox="0 0 19 21">
<defs><linearGradient id="gg340" x1="0" y1="1" x2="1" y2="0"><stop offset="0" stop-color="#f06000"/><stop offset="0.38" stop-color="#fca040"/><stop offset="0.62" stop-color="#ffd848"/><stop offset="1" stop-color="#ffe000"/></linearGradient>
<radialGradient id="gh340" cx="0.3" cy="0.3" r="0.45"><stop offset="0" stop-color="#fff4e0" stop-opacity="0.6"/><stop offset="1" stop-color="#fff8e8" stop-opacity="0"/></radialGradient>
<linearGradient id="tg340" x1="0" y1="0" x2="0.6" y2="1"><stop offset="0" stop-color="#b8e4a8"/><stop offset="0.45" stop-color="#60b850"/><stop offset="1" stop-color="#1c8a10"/></linearGradient></defs>
<path d="M15.06 6.94 L16.88 7.30 L16.88 10.10 L15.06 10.46 L14.44 11.95 L15.48 13.49 L13.49 15.48 L11.95 14.44 L10.46 15.06 L10.10 16.88 L7.30 16.88 L6.94 15.06 L5.45 14.44 L3.91 15.48 L1.92 13.49 L2.96 11.95 L2.34 10.46 L0.52 10.10 L0.52 7.30 L2.34 6.94 L2.96 5.45 L1.92 3.91 L3.91 1.92 L5.45 2.96 L6.94 2.34 L7.30 0.52 L10.10 0.52 L10.46 2.34 L11.95 2.96 L13.49 1.92 L15.48 3.91 L14.44 5.45 Z M11.80 9.2 A2.9 2.9 0 1 0 6.00 9.2 A2.9 2.9 0 1 0 11.80 9.2 Z" fill="url(#gg340)" fill-rule="evenodd" stroke="#b86a20" stroke-width="0.8"/>
<path d="M15.06 6.94 L16.88 7.30 L16.88 10.10 L15.06 10.46 L14.44 11.95 L15.48 13.49 L13.49 15.48 L11.95 14.44 L10.46 15.06 L10.10 16.88 L7.30 16.88 L6.94 15.06 L5.45 14.44 L3.91 15.48 L1.92 13.49 L2.96 11.95 L2.34 10.46 L0.52 10.10 L0.52 7.30 L2.34 6.94 L2.96 5.45 L1.92 3.91 L3.91 1.92 L5.45 2.96 L6.94 2.34 L7.30 0.52 L10.10 0.52 L10.46 2.34 L11.95 2.96 L13.49 1.92 L15.48 3.91 L14.44 5.45 Z M11.80 9.2 A2.9 2.9 0 1 0 6.00 9.2 A2.9 2.9 0 1 0 11.80 9.2 Z" fill="url(#gh340)" fill-rule="evenodd"/>
<path d="M8.3 8.3 L17.3 13.6 L8.3 19.8 Z" fill="url(#tg340)" stroke="#2a8a1e" stroke-width="0.6"/>
</svg>
<div class="t" style="left:45.3px;top:342.3px;letter-spacing:-0.045px">panels\examples\trend</div>
<svg class="a" style="left:20px;top:366px" width="8" height="10"><path d="M6.5 2.4 L6.5 7.6 L1.5 7.6 Z" fill="#3c3c3c" stroke="#1e1e1e" stroke-width="1"/></svg>
<svg class="a" style="left:34px;top:363.5px" width="16" height="15" viewBox="0 0 16 15">
<defs><linearGradient id="wb" x1="0" x2="1"><stop offset="0" stop-color="#0a3cc8"/><stop offset="1" stop-color="#30a0ff"/></linearGradient>
<linearGradient id="wf" x1="0" y1="0" x2="1" y2="1"><stop offset="0" stop-color="#fafafa"/><stop offset="1" stop-color="#d6d6d6"/></linearGradient></defs>
<rect x="0.6" y="0.6" width="14.8" height="13.8" rx="1.2" fill="url(#wf)" stroke="#404040" stroke-width="1.15"/>
<rect x="1.2" y="1.2" width="13.6" height="2.4" fill="url(#wb)"/>
<rect x="3.7" y="4.7" width="9" height="5.8" rx="1" fill="#fff" stroke="#3c3c3c" stroke-width="0.9"/>
<rect x="4.2" y="5.2" width="8" height="2.3" fill="#3a7cf0"/>
</svg>
<div class="t" style="left:61.5px;top:364.2px;letter-spacing:-0.098px">_QuickTest_</div>
<svg class="a" style="left:35px;top:388px" width="9" height="10"><path d="M2.3 1.9 L6.6 5.3 L2.3 8.6 Z" fill="#fff" stroke="#a0a0a0" stroke-width="1.1"/></svg>
<svg class="a" style="left:48px;top:384.5px" width="19" height="17" viewBox="0 0 19 17">
<defs><linearGradient id="tb" x1="0" y1="0" x2="1" y2="1"><stop offset="0" stop-color="#ffffff"/><stop offset="1" stop-color="#d0d0d0"/></linearGradient></defs>
<rect x="2" y="2" width="14" height="12" fill="url(#tb)"/>
<path d="M1.5 0.5 V14.5 H18" fill="none" stroke="#6c6c6c" stroke-width="1"/>
<path d="M0 2 L1.5 0.5 L3 2 M16.5 13 L18 14.5 L16.5 16" fill="none" stroke="#6c6c6c" stroke-width="1"/>
<path d="M2 7 L4.5 4 L9.5 9 L11 10.5" fill="none" stroke="#e03838" stroke-width="1.2"/>
<path d="M9.5 9.5 L11.5 12 L15.5 7.5" fill="none" stroke="#801010" stroke-width="1.2"/>
<path d="M2 9.5 L5 12.5 L7 10.5 L8.5 12 L14 5.5 L16 8" fill="none" stroke="#10a010" stroke-width="1.3"/>
</svg>
<div class="t" style="left:77px;top:385.6px;letter-spacing:-0.45px">Trend1</div>
<svg class="a" style="left:35px;top:410px" width="8" height="10"><path d="M6.5 2.4 L6.5 7.6 L1.5 7.6 Z" fill="#3c3c3c" stroke="#1e1e1e" stroke-width="1"/></svg>
<svg class="a" style="left:49px;top:410px" width="16" height="10" viewBox="0 0 16 10">
<defs><linearGradient id="bg" x1="0" y1="0" x2="1" y2="1"><stop offset="0" stop-color="#ffffff"/><stop offset="0.45" stop-color="#d0d0d0"/><stop offset="1" stop-color="#606060"/></linearGradient></defs>
<rect x="0.6" y="0.6" width="14.8" height="8.8" rx="1.8" fill="url(#bg)" stroke="#404040" stroke-width="1.1"/>
</svg>
<div class="t" style="left:77px;top:407.2px;letter-spacing:-0.102px">Button2</div>
<svg class="a" style="left:62px;top:427px" width="14" height="16" viewBox="0 0 14 16">
<rect x="0.7" y="0.7" width="12" height="14.6" rx="1.2" fill="#c8dcf4" stroke="#3c5a80" stroke-width="1.2"/>
<path d="M3.2 4.5h3.6M3.2 6.8h5.6M3.2 9.1h3.6M3.2 11.4h6" stroke="#1a70e0" stroke-width="1"/>
</svg>
<div class="t" style="left:86px;top:427.2px;letter-spacing:-0.22px">Clicked</div>
<div id="sb" class="a"></div>
<div id="sbup" class="a"></div>
<div id="toolbar" class="a"></div>
<div class="lbl" style="left:578px">Object:</div>
<div class="fld" style="left:631px;width:150px">Button2</div>
<div class="lbl" style="left:788px">File:</div>
<div class="fld" style="left:824px;width:170px">panels\examples\trend</div>
<div id="editor" class="a"></div>
<div id="gutter" class="a"></div>
<div class="ln" style="top:85.90px">10</div>
<div class="cl" style="top:85.90px">    <span class="f">setValue</span>(<span class="s">&quot;ThreadID&quot;</span>,<span class="s">&quot;text&quot;</span>,id);</div>
<div class="ln" style="top:101.07px">11</div>
<div class="cl" style="top:101.07px">  }</div>
<div class="ln" style="top:116.24px">12</div>
<div class="cl" style="top:116.24px">  <span class="k">else</span></div>
<div class="ln" style="top:131.41px">13</div>
<div class="cl" style="top:131.41px">  {</div>
<div class="ln" style="top:146.58px">14</div>
<div class="cl" style="top:146.58px">    <span class="f">getValue</span>(<span class="s">&quot;ThreadID&quot;</span>,<span class="s">&quot;text&quot;</span>,id);</div>
<div class="ln" style="top:161.75px">15</div>
<div class="cl" style="top:161.75px">    <span class="f">stopThread</span>(id);</div>
<div class="ln" style="top:176.92px">16</div>
<div class="cl" style="top:176.92px">    <span class="f">setValue</span>(<span class="s">&quot;&quot;</span>,<span class="s">&quot;text&quot;</span>,<span class="s">&quot;start&quot;</span>);</div>
<div class="ln" style="top:192.09px">17</div>
<div class="cl" style="top:192.09px">  }</div>
<div class="ln" style="top:207.26px">18</div>
<div class="cl" style="top:207.26px"></div>
<div class="ln" style="top:222.43px">19</div>
<div class="cl" style="top:222.43px">}</div>
<div class="ln" style="top:237.60px">20</div>
<div class="cl" style="top:237.60px"></div>
<div class="ln" style="top:252.77px">21</div>
<div class="cl" style="top:252.77px"><span class="c">// Setzt DP f1 auf zufaellige Werte im Zeitabstand d</span></div>
<div class="ln" style="top:267.94px">22</div>
<div class="cl" style="top:267.94px">work(<span class="k">int</span> d)</div>
<div class="ln" style="top:283.11px">23</div>
<div class="cl" style="top:283.11px">{</div>
<div class="ln" style="top:298.28px">24</div>
<div class="cl" style="top:298.28px"><span class="k">float</span><span class="b"> x;</span></div>
<div class="ln" style="top:313.45px">25</div>
<div class="cl" style="top:313.45px"></div>
<div class="ln" style="top:328.62px">26</div>
<div class="cl" style="top:328.62px"><span class="k">while</span>(<span class="s">1</span>)</div>
<div class="ln" style="top:343.79px">27</div>
<div class="cl" style="top:343.79px">{</div>
<div class="ln" style="top:358.96px">28</div>
<div class="cl" style="top:358.96px">  <span class="f">dpSet</span>(<span class="s">&quot;ExampleDP_Trend1.:_original.._value&quot;</span>,<span class="b">x</span>);</div>
<div class="ln" style="top:374.13px">29</div>
<div class="cl" style="top:374.13px">  <span class="f">delay</span>(d);</div>
<div class="ln" style="top:389.30px">30</div>
<div class="cl" style="top:389.30px">  <span class="b">x</span> = <span class="f">rand</span>(<span class="b">x</span>)/<span class="s">32768.0</span>;</div>
<div class="ln" style="top:404.47px">31</div>
<div class="cl" style="top:404.47px">}</div>
<div class="ln" style="top:419.64px">32</div>
<div class="cl" style="top:419.64px">}</div>
<div class="ln" style="top:438.31px">33</div>
<div class="cl" style="top:438.31px"></div>
<svg class="a" style="left:0;top:0" width="983" height="441">
<path d="M394.5 363 H400.5 V360 L409.8 364.6 L400.5 369.2 V366.2 H394.5 Z" fill="#ffc828" stroke="#000" stroke-width="1.1"/>
<path d="M395 364.6 H408" stroke="#f4a030" stroke-width="1"/>
</svg>
<!--ICONS-->
<svg class="a" style="left:0;top:0" width="983" height="441">
<!-- float icon -->
<path d="M362.5 27.5h5v5h-5z" fill="none" stroke="#000" stroke-width="1"/>
<path d="M362 27.6h6" stroke="#000" stroke-width="1.8"/>
<rect x="360.5" y="30.5" width="5" height="4.5" fill="#f2f2f2" stroke="#000" stroke-width="1"/>
<path d="M360 30.8h6" stroke="#000" stroke-width="1.6"/>
<!-- close X -->
<path d="M376.8 28.6 L383.4 35 M383.4 28.6 L376.8 35" stroke="#000" stroke-width="1.5"/>
<!-- search magnifier -->
<circle cx="348.3" cy="54.2" r="4.3" fill="none" stroke="#4a5864" stroke-width="1.6"/>
<path d="M351.2 57.2 L356.2 62" stroke="#4a5864" stroke-width="2"/>
<!-- refresh -->
<path d="M374.2 51.5 A5.6 5.6 0 1 0 381.5 57.6" fill="none" stroke="#4a5864" stroke-width="2.5"/>
<path d="M373.8 48 L378.6 51.5 L373.8 55 Z" fill="#4a5864"/>
<!-- scrollbar up arrow -->
<path d="M375.2 80.8 L380.2 73 L385.2 80.8 Z" fill="#6c747c"/>
<path d="M372 86.5 H388" stroke="#ffffff" stroke-width="1" stroke-dasharray="1.5 1.5"/>
<!-- toolbar icons -->
<g fill="#4b535b">
<rect x="408" y="58" width="3" height="10"/>
<rect x="413" y="58" width="3" height="10"/>
<path d="M438 58 L446.3 63 L438 68 Z"/>
<path d="M495 61 H500.5 V58.4 L504.8 63 L500.5 67.7 V64.8 H495 Z"/>
<path d="M505.4 59.8 A4.5 2.95 0 0 1 505.4 65.7 L506.6 62.75 Z"/>
<circle cx="476.5" cy="67.3" r="2.4"/>
<circle cx="532" cy="62.9" r="6.1"/>
<path d="M468.3 63.6 L473.2 67.6 L469 70.8 Z"/>
</g>
<path d="M472 56.2 C467 55.8 465.1 58.5 465.1 61.8 C465.2 64.5 466.5 66 468.8 67.3" fill="none" stroke="#4b535b" stroke-width="2.3"/>
<path d="M528.9 59.8 L535.1 66 M535.1 59.8 L528.9 66" stroke="#e4e8ec" stroke-width="1.2"/>
</svg>
<div class="a" style="left:552.5px;top:54px;font-size:15px;color:#2c3440">?</div>

</body></html>
